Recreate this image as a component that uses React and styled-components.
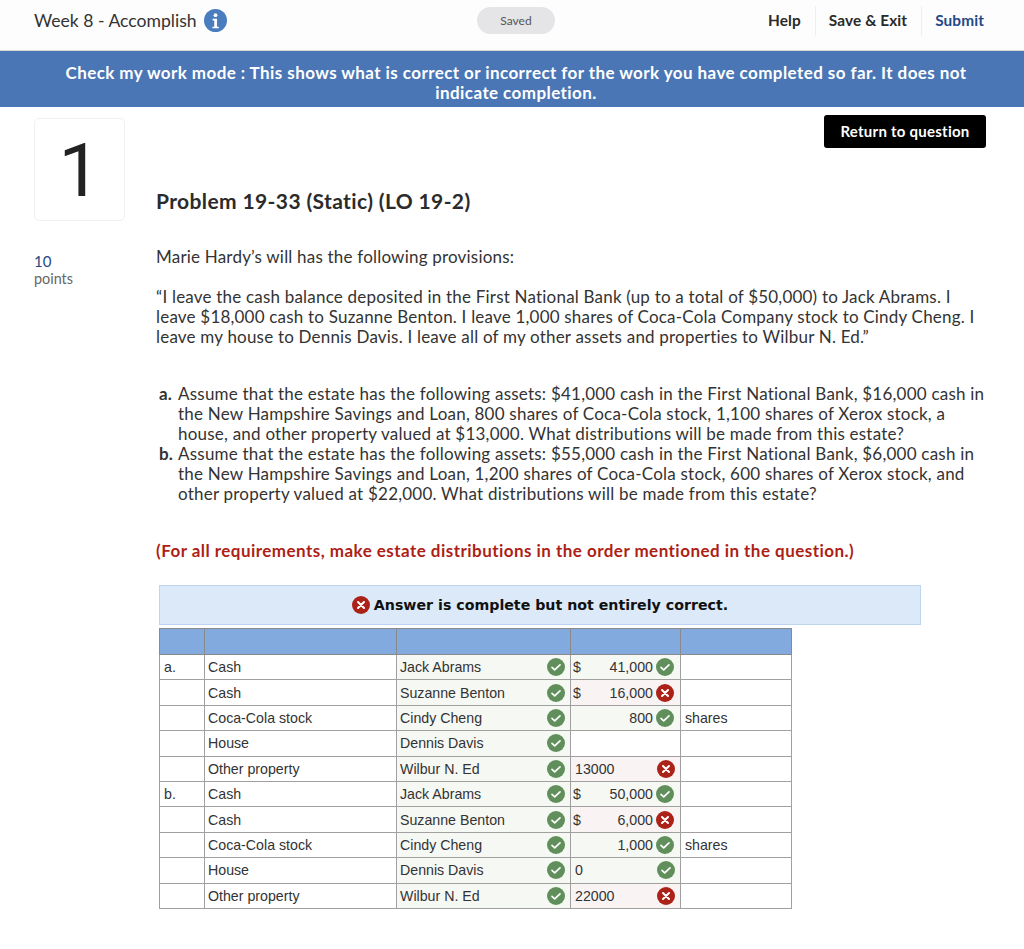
import React from "react";
import styled, { createGlobalStyle } from "styled-components";

const GlobalStyle = createGlobalStyle`
  html, body {
    margin: 0;
    padding: 0;
    background: #fff;
    font-family: "Lato", "Liberation Sans", sans-serif;
    color: #2d2d2d;
  }
`;

const TopBar = styled.header`
  height: 41px;
  display: grid;
  grid-template-columns: 443px 78px 1fr;
  align-items: center;
  padding: 0 40px 9px 34px;
  background: #fdfdfd;
  border-bottom: 1px solid #d8d8d8;
`;

const TitleWrap = styled.div`
  display: flex;
  align-items: center;
  gap: 7px;
  font-size: 17.6px;
  color: #333;
`;

const SavedPill = styled.div`
  height: 27px;
  border-radius: 14px;
  background: #e5e4e6;
  display: flex;
  align-items: center;
  justify-content: center;
  font-size: 12px;
  color: #555;
`;

const TopLinks = styled.nav`
  display: flex;
  justify-content: flex-end;
  align-items: center;
`;

const TopLink = styled.a`
  font-size: 15.4px;
  font-weight: 700;
  letter-spacing: 0.1px;
  color: ${(p) => (p.$primary ? "#1f4a86" : "#2a2a2a")};
  padding: 4px 0 6px 13px;
  margin-left: 14px;
  line-height: 20px;
  border-left: ${(p) => (p.$first ? "none" : "1px solid #eee")};
`;

const Banner = styled.div`
  background: #4a76b5;
  color: #fff;
  font-weight: 700;
  font-size: 17px;
  letter-spacing: 0.42px;
  line-height: 20px;
  text-align: center;
  padding: 12px 40px 4px 48px;
  height: 40px;
`;

const Content = styled.main`
  padding: 8px 38px 0 34px;
`;

const HeadRow = styled.div`
  display: flex;
  align-items: flex-start;
`;

const NumberCard = styled.div`
  width: 89px;
  height: 101px;
  margin-top: 3px;
  border: 1px solid #f0f0f0;
  border-radius: 5px;
  display: flex;
  align-items: center;
  justify-content: center;
  font-family: "Roboto", sans-serif;
  font-size: 75px;
  color: #222;
`;

const ProblemTitle = styled.h1`
  margin: 73px 0 0 31px;
  font-size: 21px;
  letter-spacing: 0.38px;
  line-height: 26px;
  font-weight: 700;
  color: #2b2b2b;
  flex: 1;
`;

const ReturnButton = styled.button`
  width: 162px;
  height: 33px;
  padding: 0 0 2px;
  background: #000;
  color: #fff;
  border: none;
  border-radius: 3px;
  font-family: inherit;
  font-weight: 700;
  font-size: 15px;
  letter-spacing: 0.25px;
`;

const Body = styled.div`
  display: grid;
  grid-template-columns: 122px 1fr;
  margin-top: 26px;
`;

const Points = styled.div`
  font-size: 14.4px;
  color: #666;
  line-height: 18px;
  padding-top: 5px;

  b {
    display: block;
    font-weight: 400;
    color: #1f4a86;
    font-size: 15px;
  }
`;

const Para = styled.p`
  margin: 0 0 20px;
  font-size: 17px;
  letter-spacing: 0.2px;
  line-height: 20px;
  color: #333;
`;

const PartList = styled.div`
  margin: 37px 0 37px 3px;
`;

const Part = styled.div`
  font-size: 17px;
  letter-spacing: 0.22px;
  line-height: 20px;
  color: #333;
  padding-left: 19px;
  text-indent: -19px;

  b {
    display: inline-block;
    width: 19px;
    text-indent: 0;
    font-weight: 700;
  }
`;

const Requirement = styled.p`
  margin: 0;
  font-size: 17px;
  letter-spacing: 0.46px;
  line-height: 20px;
  font-weight: 700;
  color: #ad1f16;
`;

const Indented = styled.div`
  margin-left: 122px;
`;

const ResultBox = styled.div`
  margin: 24px 0 0 3px;
  width: 760px;
  height: 38px;
  background: #dbe9f8;
  border: 1px solid #bcd4ee;
  display: flex;
  align-items: center;
  justify-content: center;
  gap: 4px;
  font-family: "DejaVu Sans", sans-serif;
  font-weight: 700;
  font-size: 14.2px;
  color: #111;
`;

const Table = styled.table`
  margin: 3px 0 0 3px;
  width: 633px;
  table-layout: fixed;
  border-collapse: collapse;
  font-family: "Liberation Sans", sans-serif;
  font-size: 14.2px;
  color: #333;
  border: 1px solid #a5a5a5;
`;

const HeadCell = styled.th`
  height: 25px;
  padding: 0;
  background: #82aadf;
  border: 1px solid #8a8a8a;
`;

const Cell = styled.td`
  height: 24.4px;
  padding: 0 ${(p) => p.$right || 6}px 0 ${(p) => p.$left || 3}px;
  border: 1px solid #a0a0a0;
  background: ${(p) =>
    p.$state === "ok" ? "#f6f8f4" : p.$state === "bad" ? "#f9f3f3" : "#fff"};
`;

const CellRow = styled.div`
  display: flex;
  align-items: center;
  justify-content: space-between;
  gap: 3px;
`;

const Amount = styled.span`
  flex: 1;
  text-align: ${(p) => (p.$text ? "left" : "right")};
  padding-left: ${(p) => (p.$text ? "2px" : "0")};
`;

const MarkCircle = styled.svg`
  flex: none;
  display: block;
`;

const InfoIcon = () => (
  <svg width="23" height="23" viewBox="0 0 24 24">
    <circle cx="12" cy="12" r="12" fill="#4a7cc0" />
    <circle cx="12" cy="6.4" r="2" fill="#fff" />
    <path d="M9 10.2h4.6v8.2H15.4v1.8H8.8v-1.8h1.9v-6.4H9z" fill="#fff" />
  </svg>
);

const Mark = ({ bad, size = 18 }) => (
  <MarkCircle width={size} height={size} viewBox="0 0 18 18">
    <circle cx="9" cy="9" r="9" fill={bad ? "#ab2318" : "#618f5b"} />
    {bad ? (
      <path d="M6 6l6 6M12 6l-6 6" stroke="#fff" strokeWidth="2" strokeLinecap="round" />
    ) : (
      <path
        d="M5 9.4l2.7 2.5L13 6.8"
        stroke="#fff"
        strokeWidth="1.7"
        fill="none"
        strokeLinecap="round"
        strokeLinejoin="round"
      />
    )}
  </MarkCircle>
);

const rows = [
  { part: "a.", item: "Cash", who: "Jack Abrams", dollar: true, amount: "41,000", mark: "ok" },
  { item: "Cash", who: "Suzanne Benton", dollar: true, amount: "16,000", mark: "bad" },
  { item: "Coca-Cola stock", who: "Cindy Cheng", amount: "800", mark: "ok", unit: "shares" },
  { item: "House", who: "Dennis Davis" },
  { item: "Other property", who: "Wilbur N. Ed", text: "13000", mark: "bad" },
  { part: "b.", item: "Cash", who: "Jack Abrams", dollar: true, amount: "50,000", mark: "ok" },
  { item: "Cash", who: "Suzanne Benton", dollar: true, amount: "6,000", mark: "bad" },
  { item: "Coca-Cola stock", who: "Cindy Cheng", amount: "1,000", mark: "ok", unit: "shares" },
  { item: "House", who: "Dennis Davis", text: "0", mark: "ok" },
  { item: "Other property", who: "Wilbur N. Ed", text: "22000", mark: "bad" },
];

function AnswerTable() {
  return (
    <Table>
      <colgroup>
        <col style={{ width: 45 }} />
        <col style={{ width: 192 }} />
        <col style={{ width: 174 }} />
        <col style={{ width: 110 }} />
        <col style={{ width: 111 }} />
      </colgroup>
      <thead>
        <tr>
          <HeadCell />
          <HeadCell />
          <HeadCell />
          <HeadCell />
          <HeadCell />
        </tr>
      </thead>
      <tbody>
        {rows.map((r, i) => (
          <tr key={i}>
            <Cell $left={4}>{r.part}</Cell>
            <Cell>{r.item}</Cell>
            <Cell $state="ok" $right={5}>
              <CellRow>
                <span>{r.who}</span>
                <Mark />
              </CellRow>
            </Cell>
            <Cell $state={r.mark} $left={2} $right={r.text ? 5 : 6}>
              {r.mark && (
                <CellRow>
                  {r.dollar && <span>$</span>}
                  <Amount $text={!!r.text}>{r.text || r.amount}</Amount>
                  <Mark bad={r.mark === "bad"} />
                </CellRow>
              )}
            </Cell>
            <Cell $left={4}>{r.unit}</Cell>
          </tr>
        ))}
      </tbody>
    </Table>
  );
}

export default function App() {
  return (
    <>
      <GlobalStyle />
      <TopBar>
        <TitleWrap>
          Week 8 - Accomplish <InfoIcon />
        </TitleWrap>
        <SavedPill>Saved</SavedPill>
        <TopLinks>
          <TopLink $first>Help</TopLink>
          <TopLink>Save &amp; Exit</TopLink>
          <TopLink $primary>Submit</TopLink>
        </TopLinks>
      </TopBar>
      <Banner>
        Check my work mode : This shows what is correct or incorrect for the work you have
        completed so far. It does not indicate completion.
      </Banner>
      <Content>
        <HeadRow>
          <NumberCard>1</NumberCard>
          <ProblemTitle>Problem 19-33 (Static) (LO 19-2)</ProblemTitle>
          <ReturnButton>Return to question</ReturnButton>
        </HeadRow>
        <Body>
          <Points>
            <b>10</b>
            points
          </Points>
          <div>
            <Para>Marie Hardy’s will has the following provisions:</Para>
            <Para>
              “I leave the cash balance deposited in the First National Bank (up to a total of
              $50,000) to Jack Abrams. I leave $18,000 cash to Suzanne Benton. I leave 1,000 shares
              of Coca-Cola Company stock to Cindy Cheng. I leave my house to Dennis Davis. I leave
              all of my other assets and properties to Wilbur N. Ed.”
            </Para>
            <PartList>
              <Part>
                <b>a.</b>Assume that the estate has the following assets: $41,000 cash in the First
                National Bank, $16,000 cash in the New Hampshire Savings and Loan, 800 shares of
                Coca-Cola stock, 1,100 shares of Xerox stock, a house, and other property valued at
                $13,000. What distributions will be made from this estate?
              </Part>
              <Part>
                <b>b.</b>Assume that the estate has the following assets: $55,000 cash in the First
                National Bank, $6,000 cash in the New Hampshire Savings and Loan, 1,200 shares of
                Coca-Cola stock, 600 shares of Xerox stock, and other property valued at $22,000.
                What distributions will be made from this estate?
              </Part>
            </PartList>
            <Requirement>
              (For all requirements, make estate distributions in the order mentioned in the
              question.)
            </Requirement>
          </div>
        </Body>
        <Indented>
          <ResultBox>
            <Mark bad /> Answer is complete but not entirely correct.
          </ResultBox>
          <AnswerTable />
        </Indented>
      </Content>
    </>
  );
}
